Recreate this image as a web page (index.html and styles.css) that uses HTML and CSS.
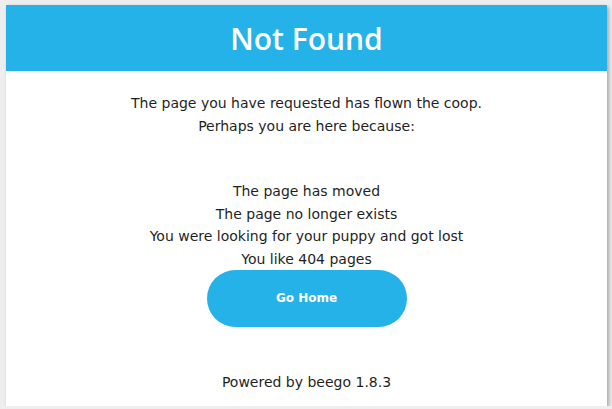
FILE: index.html
```html
<!DOCTYPE html>
<html lang="en">
<head>
    <meta charset="UTF-8">
    <meta name="viewport" content="width=device-width, initial-scale=1.0">
    <title>Not Found</title>
    <link rel="stylesheet" href="styles.css">
</head>
<body>
    <div class="container">
        <div class="header">
            <h1>Not Found</h1>
        </div>
        <div class="content">
            <p class="intro">The page you have requested has flown the coop.<br>Perhaps you are here because:</p>
            <ul class="reasons">
                <li>The page has moved</li>
                <li>The page no longer exists</li>
                <li>You were looking for your puppy and got lost</li>
                <li>You like 404 pages</li>
            </ul>
            <a class="home-button" href="/">Go Home</a>
            <p class="footer">Powered by beego 1.8.3</p>
        </div>
    </div>
</body>
</html>
```

FILE: styles.css
```css
body {
    font-family: "DejaVu Sans", Verdana, sans-serif;
    margin: 0;
    padding: 5px 5px 0 6px;
    background: #eeeeee;
    color: #1f1f1f;
}
.container {
    background: #fff;
    height: 401px;
    box-shadow: 2px 2px 4px rgba(0, 0, 0, 0.3);
}
.header {
    background: #25b2e8;
    height: 66px;
    display: flex;
    align-items: center;
    justify-content: center;
}
h1 {
    margin: 0;
    color: #fff;
    font-family: "Open Sans", sans-serif;
    font-weight: 600;
    font-size: 30px;
}
.content {
    display: flex;
    flex-direction: column;
    align-items: center;
    text-align: center;
    font-size: 14px;
    line-height: 22.5px;
}
.intro { margin: 21px 0 0; }
.reasons {
    list-style: none;
    margin: 43px 0 0;
    padding: 0;
}
.home-button {
    display: flex;
    align-items: center;
    justify-content: center;
    width: 200px;
    height: 57px;
    border-radius: 29px;
    background: #25b2e8;
    color: #fff;
    text-decoration: none;
    font-weight: bold;
    font-size: 12px;
}
.footer { margin: 44px 0 0; }
```
